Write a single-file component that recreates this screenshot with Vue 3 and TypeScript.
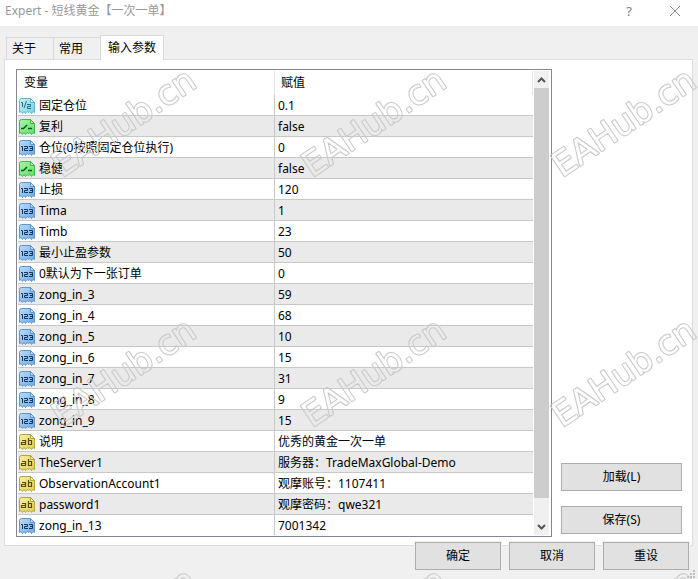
<script setup lang="ts">
import { ref } from 'vue'

type Kind = 'double' | 'bool' | 'int' | 'text'

interface Param {
  kind: Kind
  name: string
  value: string
}

const params: Param[] = [
  { kind: 'double', name: '固定仓位', value: '0.1' },
  { kind: 'bool', name: '复利', value: 'false' },
  { kind: 'int', name: '仓位(0按照固定仓位执行)', value: '0' },
  { kind: 'bool', name: '稳健', value: 'false' },
  { kind: 'int', name: '止损', value: '120' },
  { kind: 'int', name: 'Tima', value: '1' },
  { kind: 'int', name: 'Timb', value: '23' },
  { kind: 'int', name: '最小止盈参数', value: '50' },
  { kind: 'int', name: '0默认为下一张订单', value: '0' },
  { kind: 'int', name: 'zong_in_3', value: '59' },
  { kind: 'int', name: 'zong_in_4', value: '68' },
  { kind: 'int', name: 'zong_in_5', value: '10' },
  { kind: 'int', name: 'zong_in_6', value: '15' },
  { kind: 'int', name: 'zong_in_7', value: '31' },
  { kind: 'int', name: 'zong_in_8', value: '9' },
  { kind: 'int', name: 'zong_in_9', value: '15' },
  { kind: 'text', name: '说明', value: '优秀的黄金一次一单' },
  { kind: 'text', name: 'TheServer1', value: '服务器：TradeMaxGlobal-Demo' },
  { kind: 'text', name: 'ObservationAccount1', value: '观摩账号：1107411' },
  { kind: 'text', name: 'password1', value: '观摩密码：qwe321' },
  { kind: 'int', name: 'zong_in_13', value: '7001342' },
]

const tabs = ['关于', '常用', '输入参数']
const active = ref(2)

const palette: Record<Kind, { light: string; dark: string; edge: string; ink: string }> = {
  double: { light: '#c8f3f9', dark: '#74d0e2', edge: '#5fb9cc', ink: '#1d6f82' },
  bool: { light: '#a9f5a4', dark: '#62dc6a', edge: '#41b84c', ink: '#0b5a17' },
  int: { light: '#b9dcfb', dark: '#6ca9e2', edge: '#5f96cc', ink: '#12365f' },
  text: { light: '#f8f0a0', dark: '#dfce58', edge: '#b5a43c', ink: '#554a08' },
}
const kinds: Kind[] = ['double', 'bool', 'int', 'text']
</script>

<template>
  <main class="dialog">
    <svg class="defs" width="0" height="0" aria-hidden="true">
      <defs>
        <linearGradient v-for="k in kinds" :id="'fill-' + k" :key="k" x1="0" y1="0" x2="1" y2="1">
          <stop offset="0" :stop-color="palette[k].light" />
          <stop offset="1" :stop-color="palette[k].dark" />
        </linearGradient>
      </defs>
    </svg>

    <header class="titlebar">
      <h1>Expert - 短线黄金【一次一单】</h1>
      <button class="caption" type="button">?</button>
      <button class="caption" type="button">
        <svg width="12" height="12" viewBox="0 0 12 12">
          <path d="M1 1L11 11M11 1L1 11" fill="none" stroke="#8c8c8c" stroke-width="1" />
        </svg>
      </button>
    </header>

    <nav class="tabs">
      <button
        v-for="(t, i) in tabs"
        :key="t"
        type="button"
        class="tab"
        :class="{ active: i === active }"
        @click="active = i"
      >{{ t }}</button>
    </nav>

    <section class="panel">
      <div class="list">
        <table>
          <colgroup>
            <col class="col-name" />
            <col />
          </colgroup>
          <thead>
            <tr><th>变量</th><th>赋值</th></tr>
          </thead>
          <tbody>
            <tr v-for="p in params" :key="p.name">
              <td>
                <div class="name">
                  <svg width="16" height="16" viewBox="0 0 16 16">
                    <path
                      d="M2.500 .5H11.500L15.500 4.500V14.500L14 13.500L12.500 15.500L11 13.500L9.500 14.500L8 13.500L6.500 15.500L5 13.500L3.500 15.500L2 13.500L.5 14.500V2.500Q.5 .5 2.500 .5Z"
                      :fill="'url(#fill-' + p.kind + ')'"
                      :stroke="palette[p.kind].edge"
                    />
                    <path d="M11.500 .5V4.500H15.500Z" :fill="palette[p.kind].light" :stroke="palette[p.kind].edge" />
                    <g fill="none" :stroke="palette[p.kind].ink">
                      <path v-if="p.kind === 'bool'" d="M2 9.500H4.500L8 6M9 9.500H13" stroke-width="1.500" />
                      <path v-else-if="p.kind === 'int'" d="M2 6.500H3.500V11M5 6.500H8.500V8.500H5.500V10.500H9M10 6.500H13.500V10.500H10M11 8.500H13.500" />
                      <path v-else-if="p.kind === 'double'" d="M2 4.500H3.500V9M7.500 3L5 10M8 6.500H11.500V8.500H8.500V10.500H12" />
                      <path v-else d="M3 6.500H6.500V11M6.500 10.500H2.500V8.500H6.500M9.500 4V10.500H12.500V6.500H9.500" stroke-width="1.200" />
                    </g>
                  </svg>
                  <span>{{ p.name }}</span>
                </div>
              </td>
              <td>{{ p.value }}</td>
            </tr>
          </tbody>
        </table>
        <div class="scroll">
          <button type="button" aria-label="上">
            <svg width="9" height="6" viewBox="0 0 9 6"><path d="M1 5L4.500 1.500L8 5" fill="none" stroke="#555" stroke-width="2" /></svg>
          </button>
          <div class="thumb"></div>
          <button type="button" aria-label="下">
            <svg width="9" height="6" viewBox="0 0 9 6"><path d="M1 1L4.500 4.500L8 1" fill="none" stroke="#555" stroke-width="2" /></svg>
          </button>
        </div>
      </div>
      <div class="side">
        <button class="btn" type="button">加载(L)</button>
        <button class="btn" type="button">保存(S)</button>
      </div>
    </section>

    <footer class="actions">
      <button class="btn" type="button">确定</button>
      <button class="btn" type="button">取消</button>
      <button class="btn" type="button">重设</button>
    </footer>

    <svg class="grip" width="8" height="8" viewBox="0 0 8 8" aria-hidden="true">
      <path d="M6 0h2v2H6zM3 3h2v2H3zM6 3h2v2H6zM0 6h2v2H0zM3 6h2v2H3zM6 6h2v2H6z" fill="#bfbfbf" />
    </svg>

    <svg class="watermark" aria-hidden="true">
      <defs>
        <mask id="outline" maskUnits="userSpaceOnUse" x="0" y="0" width="250" height="250">
          <text class="outer" transform="translate(62 178) rotate(-34)">EAHub.cn</text>
          <text class="inner" transform="translate(62 178) rotate(-34)">EAHub.cn</text>
        </mask>
        <pattern id="mark" x="0" y="0" width="250" height="250" patternUnits="userSpaceOnUse">
          <rect width="250" height="250" fill="#c8c8c8" mask="url(#outline)" />
        </pattern>
      </defs>
      <rect width="100%" height="100%" fill="url(#mark)" />
    </svg>
  </main>
</template>

<style>
body {
  margin: 0;
  background: #f0f0f0;
}
</style>

<style scoped>
.dialog {
  position: relative;
  min-height: 100vh;
  overflow: hidden;
  box-sizing: border-box;
  background: #f0f0f0;
  color: #000;
  font: 12px/20px "Noto Sans", "Noto Sans CJK SC", sans-serif;
}
button {
  font: inherit;
  color: inherit;
  padding: 0;
  margin: 0;
}
.defs {
  position: absolute;
}
.titlebar {
  display: flex;
  align-items: center;
  height: 26px;
  padding: 0 0 4px 5px;
  box-sizing: border-box;
  background: #fff;
  color: #999;
}
h1 {
  flex: 1;
  margin: 0;
  font-size: 12px;
  font-weight: 400;
}
.caption {
  display: flex;
  align-items: center;
  justify-content: center;
  width: 46px;
  height: 20px;
  border: 0;
  background: none;
  font-size: 13px;
  color: #808080;
}
.tabs {
  display: flex;
  align-items: flex-end;
  height: 33px;
  padding-left: 6px;
}
.tab {
  height: 22px;
  padding: 0 17px 0 5px;
  border: 1px solid #d9d9d9;
  border-width: 1px 0 0 1px;
  background: #f0f0f0;
}
.tab.active {
  position: relative;
  height: 25px;
  margin-bottom: -1px;
  padding: 0 7px 1px;
  border-right-width: 1px;
  background: #fff;
}
.panel {
  display: flex;
  justify-content: space-between;
  gap: 9px;
  margin: 0 5px 0 4px;
  padding: 9px 10px 8px 11px;
  border: 1px solid #dcdcdc;
  background: #fff;
}
.list {
  display: flex;
  flex: 1;
  padding: 1px;
  border: 1px solid #828790;
}
table {
  flex: 1;
  border-collapse: separate;
  border-spacing: 0;
  table-layout: fixed;
}
.col-name {
  width: 257px;
}
th,
td {
  padding: 0 3px;
  text-align: left;
  font-weight: 400;
  white-space: nowrap;
}
th {
  height: 24px;
  padding: 0 6px;
  border-right: 1px solid #e5e5e5;
}
td {
  height: 18px;
  padding-top: 2px;
  border-bottom: 1px solid #c8c8c8;
  line-height: 18px;
}
td:first-child {
  padding: 2px 0 0 1px;
  border-right: 1px solid #c8c8c8;
}
tbody tr:nth-child(even) {
  background: #eaeaea;
}
tbody tr:last-child td {
  border-bottom: 0;
}
.name {
  display: flex;
  align-items: center;
  gap: 4px;
  height: 18px;
}
.scroll {
  display: flex;
  flex-direction: column;
  width: 15px;
  margin: 0 1px;
  background: #f0f0f0;
}
.scroll button {
  display: flex;
  align-items: center;
  justify-content: center;
  height: 17px;
  border: 0;
  background: #f0f0f0;
}
.thumb {
  flex: 1;
  margin-bottom: 20px;
  background: #cdcdcd;
}
.side {
  display: flex;
  flex-direction: column;
  justify-content: flex-end;
  gap: 15px;
  width: 121px;
  padding-bottom: 3px;
}
.btn {
  height: 28px;
  border: 1px solid #adadad;
  background: #e1e1e1;
}
.actions {
  position: relative;
  display: flex;
  justify-content: flex-end;
  gap: 8px;
  margin-top: -4px;
  padding-right: 9px;
}
.actions .btn {
  width: 86px;
  box-shadow: 0 0 0 1px #f0f0f0;
}
.grip {
  position: absolute;
  right: 3px;
  bottom: 1px;
}
.watermark {
  position: absolute;
  inset: 0;
  width: 100%;
  height: 100%;
  pointer-events: none;
}
.watermark text {
  font: 34px "DejaVu Sans", sans-serif;
  stroke-linejoin: round;
}
.outer {
  fill: #fff;
  stroke: #fff;
  stroke-width: 2px;
}
.inner {
  fill: #000;
}
</style>
